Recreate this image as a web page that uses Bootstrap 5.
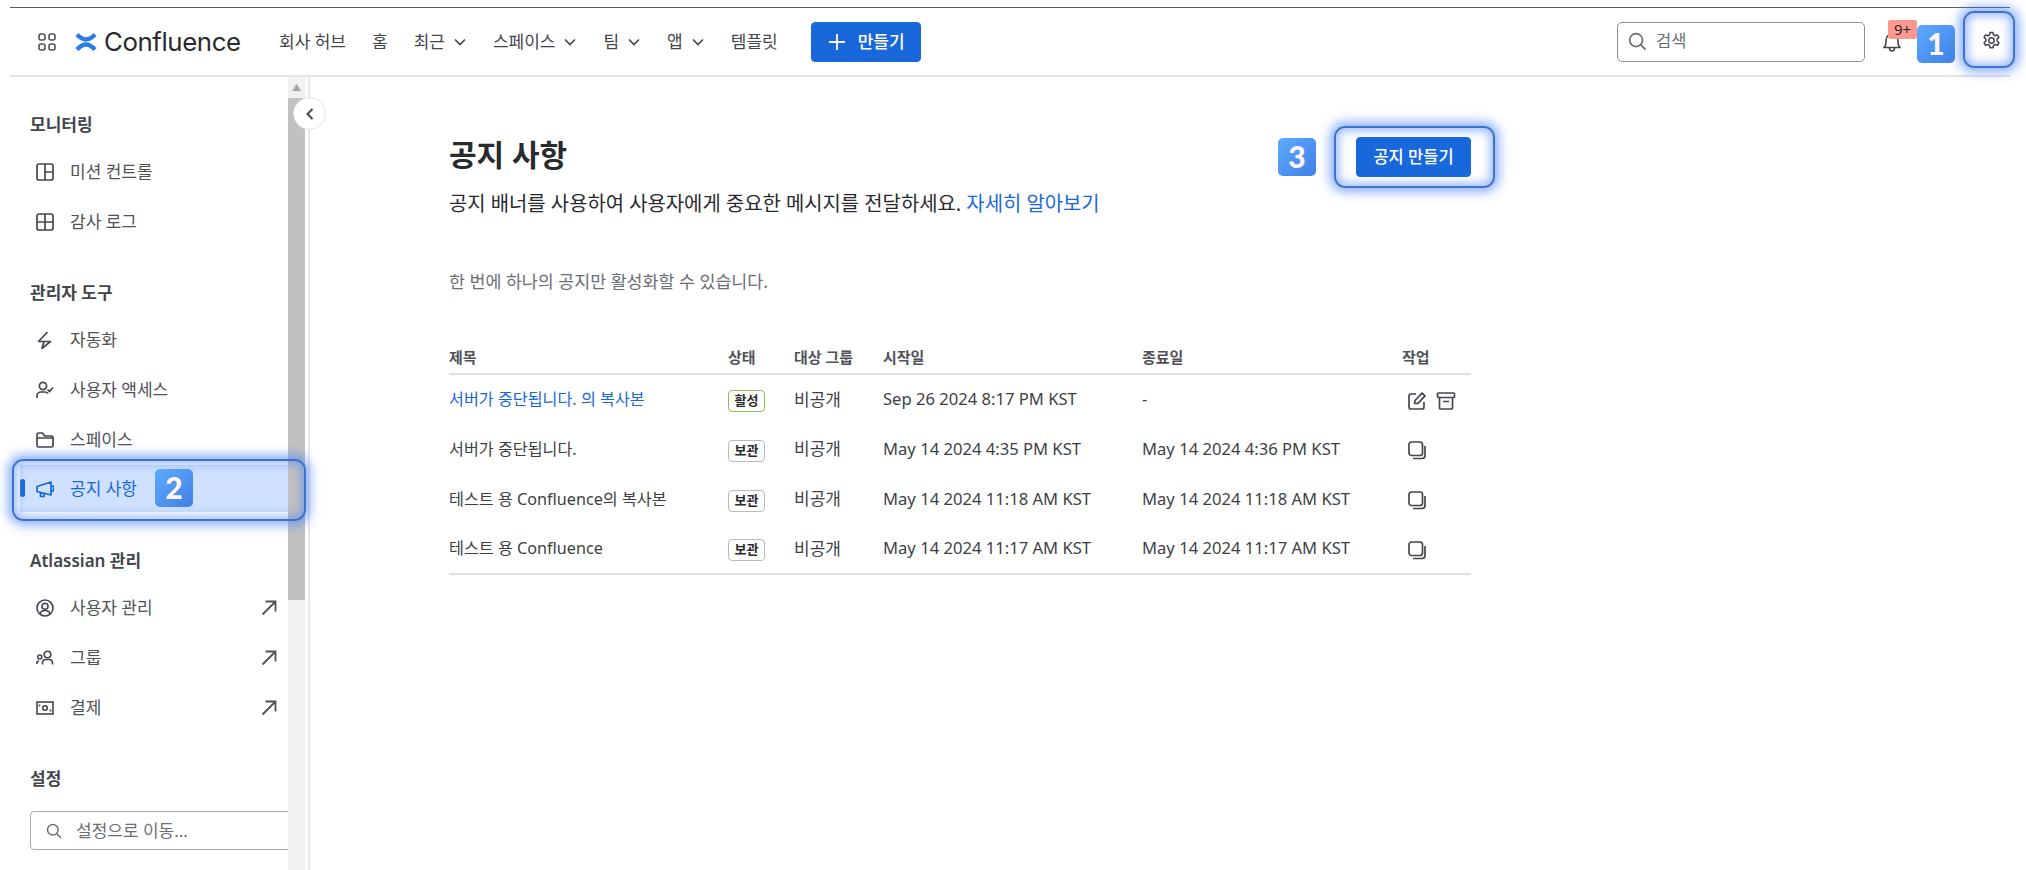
<!DOCTYPE html>
<html lang="ko">
<head>
<meta charset="utf-8">
<title>공지 사항</title>
<link href="https://cdn.jsdelivr.net/npm/bootstrap@5.3.0/dist/css/bootstrap.min.css" rel="stylesheet">
<style>
html,body{height:870px;overflow:hidden;background:#fff}
body{font-family:"Noto Sans","Noto Sans CJK KR",sans-serif;color:#292a2e;font-size:15px}
.shell{position:relative;margin:7px 16px 0 10px;height:863px;overflow:visible}
.topbar{height:70px;border-top:1.5px solid #5a5a5a;border-bottom:2px solid #e4e5e8;padding-left:28px}
.grid-ic{width:18px;height:18px;color:#505258}
.logo-ic{margin-left:19px;width:22px;height:20px}
.logo-tx{font-family:"Inter","Noto Sans",sans-serif;font-size:25.8px;margin-left:7px;color:#292a2e;letter-spacing:-.4px;line-height:1;width:139px}
.menu{margin-left:36px;gap:26px;font-size:17px;color:#42454c}
.menu span{white-space:nowrap}
.menu svg{width:14px;height:14px;margin-left:8px;vertical-align:-1px}
.make-btn{--bs-btn-bg:#1868db;--bs-btn-border-color:#1868db;--bs-btn-hover-bg:#1868db;--bs-btn-hover-border-color:#1868db;width:110px;height:40px;margin-left:33px;font-size:17px;font-weight:500;padding:0;border-radius:4px}
.make-btn svg{width:20px;height:20px;margin-right:11px}
.search-box{width:248px;height:40px;border:1.5px solid #8c8f97;border-radius:5px;color:#6b6e76;font-size:16.500px;padding-left:10px}
.search-box svg{width:19px;height:19px;margin-right:9px}
.bell-wrap{width:18px;margin-left:18px;margin-right:109px}
.bell-wrap svg{width:18px;height:20px;color:#44474e;display:block}
.note-badge{position:absolute;left:1878px;top:13px;width:29px;height:19px;background:#fd9891;border-radius:2px;font-size:15px;line-height:19px;text-align:center;color:#292a2e}
.gear-ic{position:absolute;left:1972px;top:24px;width:19px;height:19px;color:#44474e}
.work{height:793px}
.sidebar{width:300px;border-right:2px solid #e8e8ea;position:relative;height:793px}
.side-body{width:278px;overflow:hidden;padding-top:26px;height:793px;flex:none}
.side-head{height:44px;line-height:44px;padding-left:20px;font-size:17px;font-weight:600;color:#42454c}
.side-gap-a{margin-top:24px}
.side-gap-b{margin-top:27px}
.side-gap-c{margin-top:24px}
.side-item{height:50px;margin-left:10px;padding-left:16px;font-size:17px;color:#505258;position:relative}
.side-item svg.ic{width:18px;height:18px;margin-right:16px;flex:none;color:#44474e}
.side-item svg.arr{position:absolute;left:241px;top:17px;width:16px;height:16px;color:#505258}
.side-on{color:#1868db;background:#cfe1fd;height:47px}
.side-on svg.ic{color:#1868db}
.side-on::before{content:"";position:absolute;left:0;top:14px;width:5px;height:18px;border-radius:3px;background:#1868db}
.side-find{margin:10px 0 0 20px;width:280px;height:39px;border:1.5px solid #a9abb1;border-radius:4px;color:#6b6e76;padding-left:15px;font-size:17px}
.side-find svg{width:16px;height:16px;margin-right:14px}
.sb-track{width:17px;height:793px;background:#f1f1f1;flex:none}
.sb-btn{height:21px;text-align:center;color:#a3a3a3;font-size:9px;line-height:21px}
.sb-thumb{height:502px;background:#c1c1c1}
.fold{position:absolute;left:283px;top:20px;width:33px;height:33px;border-radius:50%;background:#fff;border:1.5px solid #e2e3e6;color:#44474e;z-index:2}
.fold svg{width:14px;height:14px}
.page{padding:60px 0 0 139px;width:1170px}
.page-top{height:40px;width:1022px}
.page-title{font-size:30px;font-weight:700;margin:0;line-height:36px;color:#292a2e}
.new-btn{--bs-btn-bg:#1868db;--bs-btn-border-color:#1868db;--bs-btn-hover-bg:#1868db;--bs-btn-hover-border-color:#1868db;width:115px;height:40px;padding:0;font-size:16.500px;font-weight:500;border-radius:4px}
.page-sub{font-size:19.9px;line-height:28px;margin:13px 0 0;color:#292a2e}
.page-sub a{color:#1868db;text-decoration:none}
.page-hint{font-size:17.35px;line-height:24px;margin:51px 0 0;color:#6b6e76}
.tbl{table-layout:fixed;width:1022px;margin:49px 0 0;--bs-table-border-color:transparent;color:#292a2e}
.tbl th{height:32px;padding:0;font-size:15px;font-weight:600;color:#505258;border-bottom:2.5px solid #dfe1e4;vertical-align:middle}
.tbl td{height:50px;padding:0;font-size:16.6px;vertical-align:middle;border:0;color:#3d3f45}
.tbl td.ttl{font-size:16.2px;white-space:nowrap}
.tbl td.grp{font-size:17px}
.tbl tbody tr:last-child td{border-bottom:2.5px solid #dfe1e4}
.tbl a{color:#1868db;text-decoration:none}
.pill{display:inline-block;width:37px;height:22px;border:1.5px solid #b7b9bf;border-radius:4px;font-size:13px;font-weight:700;line-height:19px;text-align:center;color:#292a2e}
.pill-on{border-color:#8fc04f}
.act svg{width:20px;height:20px;color:#44474e;margin-left:5px}
.act svg+svg{margin-left:9px}
.hilite{position:absolute;border:2.5px solid #3f72cc;border-radius:11px;box-shadow:0 0 11px 4px rgba(72,130,250,.65),inset 0 0 10px 3px rgba(72,130,250,.55);pointer-events:none;z-index:3}
.hl-gear{left:1953px;top:4px;width:52px;height:57px}
.hl-item{left:2px;top:452px;width:294px;height:62px}
.hl-new{left:1324px;top:119px;width:161px;height:62px}
.step{position:absolute;width:38px;height:38px;border-radius:5px;background:linear-gradient(135deg,#5fabff,#3f7fe6);color:#fff5ff;font-family:"Lato",sans-serif;font-weight:900;font-size:30px;line-height:37px;text-align:center;z-index:4}
.st-1{left:1907px;top:18px}
.st-2{left:145px;top:462px}
.st-3{left:1268px;top:131px}
</style>
</head>
<body>
<div class="shell">
  <header class="topbar d-flex align-items-center">
    <svg class="grid-ic" viewBox="0 0 18 18" fill="none" stroke="currentColor" stroke-width="1.6"><rect x="1" y="1" width="6" height="6" rx="2"/><rect x="11" y="1" width="6" height="6" rx="2"/><rect x="1" y="11" width="6" height="6" rx="2"/><rect x="11" y="11" width="6" height="6" rx="2"/></svg>
    <svg class="logo-ic" viewBox="0 0 22 20" fill="none" stroke="#2b7be8" stroke-width="4.400"><path d="M2 2.500c3.500 3.700 6.200 5 9 5s5.500-1.300 9-5"/><path d="M2 17.500c3.500-3.700 6.200-5 9-5s5.500 1.300 9 5"/></svg>
    <span class="logo-tx">Confluence</span>
    <nav class="menu d-flex align-items-center">
      <span>회사 허브</span><span>홈</span>
      <span>최근<svg viewBox="0 0 14 14" fill="none" stroke="currentColor" stroke-width="1.6"><path d="m2 4.500 5 5 5-5"/></svg></span>
      <span>스페이스<svg viewBox="0 0 14 14" fill="none" stroke="currentColor" stroke-width="1.6"><path d="m2 4.500 5 5 5-5"/></svg></span>
      <span>팀<svg viewBox="0 0 14 14" fill="none" stroke="currentColor" stroke-width="1.6"><path d="m2 4.500 5 5 5-5"/></svg></span>
      <span>앱<svg viewBox="0 0 14 14" fill="none" stroke="currentColor" stroke-width="1.6"><path d="m2 4.500 5 5 5-5"/></svg></span>
      <span>템플릿</span>
    </nav>
    <button class="btn btn-primary make-btn d-flex align-items-center justify-content-center"><svg viewBox="0 0 20 20" fill="none" stroke="currentColor" stroke-width="1.8"><path d="M10 2v16M2 10h16"/></svg>만들기</button>
    <div class="search-box d-flex align-items-center ms-auto"><svg viewBox="0 0 20 20" fill="none" stroke="currentColor" stroke-width="1.8"><circle cx="8.500" cy="8.500" r="6.800"/><path d="m13.500 13.500 5 5"/></svg>검색</div>
    <div class="bell-wrap"><svg viewBox="0 0 18 20" fill="none" stroke="currentColor" stroke-width="1.6"><path d="M1 15.500c1.500-1.500 2-2.500 2-5V8a6 6 0 0 1 12 0v2.500c0 2.500.5 3.500 2 5ZM6.500 16c0 4 5 4 5 0"/></svg></div>
  </header>
  <span class="note-badge">9+</span>
  <svg class="gear-ic" viewBox="0 0 20 20" fill="none" stroke="currentColor" stroke-width="1.6"><circle cx="10" cy="10" r="2.800"/><path d="M8.500 1.500h3l.6 2.500 1.700 1 2.500-.8 1.500 2.600-1.900 1.800v2l1.900 1.800-1.500 2.600-2.500-.8-1.700 1-.6 2.500h-3l-.6-2.500-1.700-1-2.500.8-1.500-2.600 1.900-1.800v-2L2.200 6.800l1.500-2.600 2.500.8 1.700-1Z" stroke-linejoin="round"/></svg>

  <div class="work d-flex">
    <aside class="sidebar d-flex flex-none">
      <div class="side-body">
        <div class="side-head">모니터링</div>
        <div class="side-item d-flex align-items-center"><svg class="ic" viewBox="0 0 18 18" fill="none" stroke="currentColor" stroke-width="1.700"><rect x="1" y="1" width="16" height="16" rx="2"/><path d="M9 1v16M9 9h8"/></svg>미션 컨트롤</div>
        <div class="side-item d-flex align-items-center"><svg class="ic" viewBox="0 0 18 18" fill="none" stroke="currentColor" stroke-width="1.700"><rect x="1" y="1" width="16" height="16" rx="2"/><path d="M9 1v16M1 9h16"/></svg>감사 로그</div>
        <div class="side-head side-gap-a">관리자 도구</div>
        <div class="side-item d-flex align-items-center"><svg class="ic" viewBox="0 0 18 18" fill="none" stroke="currentColor" stroke-width="1.700" stroke-linejoin="round"><path d="M11.500 1 2.500 10.500h12L6 17.500l2-7"/></svg>자동화</div>
        <div class="side-item d-flex align-items-center"><svg class="ic" viewBox="0 0 18 18" fill="none" stroke="currentColor" stroke-width="1.700"><circle cx="7" cy="5" r="3.600"/><path d="M1 17v-2a4 4 0 0 1 4-4h4a4 4 0 0 1 3 1.500M11.500 8.500l2 2 3.500-4"/></svg>사용자 액세스</div>
        <div class="side-item d-flex align-items-center"><svg class="ic" viewBox="0 0 18 18" fill="none" stroke="currentColor" stroke-width="1.700"><path d="M1 5V3.500A1.500 1.500 0 0 1 2.500 2h4l2 3H15.500A1.500 1.500 0 0 1 17 6.500v8a1.500 1.500 0 0 1-1.500 1.500h-13A1.500 1.500 0 0 1 1 14.500V5Zm0 2h16"/></svg>스페이스</div>
        <div class="side-item side-on d-flex align-items-center"><svg class="ic" viewBox="0 0 18 18" fill="none" stroke="currentColor" stroke-width="1.700" stroke-linejoin="round"><path d="M1 6.500 15 2v13L1 11.500ZM15 6h2.500v5H15M4.500 12v4.500h3.500v-3.500"/></svg>공지 사항</div>
        <div class="side-head side-gap-b">Atlassian 관리</div>
        <div class="side-item d-flex align-items-center"><svg class="ic" viewBox="0 0 18 18" fill="none" stroke="currentColor" stroke-width="1.600"><circle cx="9" cy="9" r="8"/><circle cx="9" cy="7.200" r="3"/><path d="M4 15c.5-2.500 2-3.500 5-3.500s4.500 1 5 3.500"/></svg>사용자 관리<svg class="arr" viewBox="0 0 16 16" fill="none" stroke="currentColor" stroke-width="1.800"><path d="M1.500 14.500 14 2M4.500 1.500H14.500V11.500"/></svg></div>
        <div class="side-item d-flex align-items-center"><svg class="ic" viewBox="0 0 18 18" fill="none" stroke="currentColor" stroke-width="1.600"><circle cx="3.800" cy="8" r="2"/><circle cx="11.500" cy="5.500" r="3.300"/><path d="M1 15v-1c0-1.500 1-2 2-2M6.500 15.500v-1.500c0-2 1.500-3.500 3.500-3.500h3c2 0 3.500 1.500 3.500 3.500v1.500"/></svg>그룹<svg class="arr" viewBox="0 0 16 16" fill="none" stroke="currentColor" stroke-width="1.800"><path d="M1.500 14.500 14 2M4.500 1.500H14.500V11.500"/></svg></div>
        <div class="side-item d-flex align-items-center"><svg class="ic" viewBox="0 0 18 18" fill="none" stroke="currentColor" stroke-width="1.600"><rect x="1" y="3" width="16" height="12"/><circle cx="9" cy="9" r="2.300"/><path d="M3.500 5.500v2M14.500 10.500v2"/></svg>결제<svg class="arr" viewBox="0 0 16 16" fill="none" stroke="currentColor" stroke-width="1.800"><path d="M1.500 14.500 14 2M4.500 1.500H14.500V11.500"/></svg></div>
        <div class="side-head side-gap-c">설정</div>
        <div class="side-find d-flex align-items-center"><svg viewBox="0 0 16 16" fill="none" stroke="currentColor" stroke-width="1.500"><circle cx="6.800" cy="6.800" r="5.300"/><path d="m10.800 10.800 4.200 4.200"/></svg>설정으로 이동...</div>
      </div>
      <div class="sb-track">
        <div class="sb-btn">▲</div>
        <div class="sb-thumb"></div>
      </div>
      <button class="fold btn p-0 d-flex align-items-center justify-content-center"><svg viewBox="0 0 14 14" fill="none" stroke="currentColor" stroke-width="2"><path d="M9.500 2 4.500 7l5 5"/></svg></button>
    </aside>
    <main class="page">
      <div class="page-top d-flex justify-content-between">
        <h1 class="page-title">공지 사항</h1>
        <button class="btn btn-primary new-btn">공지 만들기</button>
      </div>
      <p class="page-sub">공지 배너를 사용하여 사용자에게 중요한 메시지를 전달하세요. <a href="#">자세히 알아보기</a></p>
      <p class="page-hint">한 번에 하나의 공지만 활성화할 수 있습니다.</p>
      <table class="table tbl">
        <colgroup><col style="width:279px"><col style="width:66px"><col style="width:89px"><col style="width:259px"><col style="width:260px"><col style="width:69px"></colgroup>
        <thead><tr><th>제목</th><th>상태</th><th>대상 그룹</th><th>시작일</th><th>종료일</th><th>작업</th></tr></thead>
        <tbody>
          <tr><td class="ttl"><a href="#">서버가 중단됩니다. 의 복사본</a></td><td><span class="pill pill-on">활성</span></td><td class="grp">비공개</td><td>Sep 26 2024 8:17 PM KST</td><td>-</td><td class="act"><svg viewBox="0 0 20 20" fill="none" stroke="currentColor" stroke-width="1.700" stroke-linejoin="round"><path d="M9 3H4a2 2 0 0 0-2 2v11a2 2 0 0 0 2 2h11a2 2 0 0 0 2-2v-5"/><path d="M7.500 12.500 8 9.500l7-7.500 3 2.800-7 7.500Z"/></svg><svg viewBox="0 0 20 20" fill="none" stroke="currentColor" stroke-width="1.700"><rect x="1.500" y="2" width="17" height="4.500" rx="1"/><path d="M3.500 6.500V17a1 1 0 0 0 1 1h11a1 1 0 0 0 1-1V6.500M7 10.500h6"/></svg></td></tr>
          <tr><td class="ttl">서버가 중단됩니다.</td><td><span class="pill">보관</span></td><td class="grp">비공개</td><td>May 14 2024 4:35 PM KST</td><td>May 14 2024 4:36 PM KST</td><td class="act"><svg viewBox="0 0 20 20" fill="none" stroke="currentColor" stroke-width="1.700"><rect x="2" y="2" width="13.500" height="13.500" rx="2.500"/><path d="M18 6v9.500a3 3 0 0 1-3 3H6"/></svg></td></tr>
          <tr><td class="ttl">테스트 용 Confluence의 복사본</td><td><span class="pill">보관</span></td><td class="grp">비공개</td><td>May 14 2024 11:18 AM KST</td><td>May 14 2024 11:18 AM KST</td><td class="act"><svg viewBox="0 0 20 20" fill="none" stroke="currentColor" stroke-width="1.700"><rect x="2" y="2" width="13.500" height="13.500" rx="2.500"/><path d="M18 6v9.500a3 3 0 0 1-3 3H6"/></svg></td></tr>
          <tr><td class="ttl">테스트 용 Confluence</td><td><span class="pill">보관</span></td><td class="grp">비공개</td><td>May 14 2024 11:17 AM KST</td><td>May 14 2024 11:17 AM KST</td><td class="act"><svg viewBox="0 0 20 20" fill="none" stroke="currentColor" stroke-width="1.700"><rect x="2" y="2" width="13.500" height="13.500" rx="2.500"/><path d="M18 6v9.500a3 3 0 0 1-3 3H6"/></svg></td></tr>
        </tbody>
      </table>
    </main>
  </div>
  <div class="hilite hl-gear"></div>
  <div class="hilite hl-item"></div>
  <div class="hilite hl-new"></div>
  <div class="step st-1">1</div>
  <div class="step st-2">2</div>
  <div class="step st-3">3</div>
</div>
<script src="https://cdn.jsdelivr.net/npm/bootstrap@5.3.0/dist/js/bootstrap.bundle.min.js"></script>
</body>
</html>
